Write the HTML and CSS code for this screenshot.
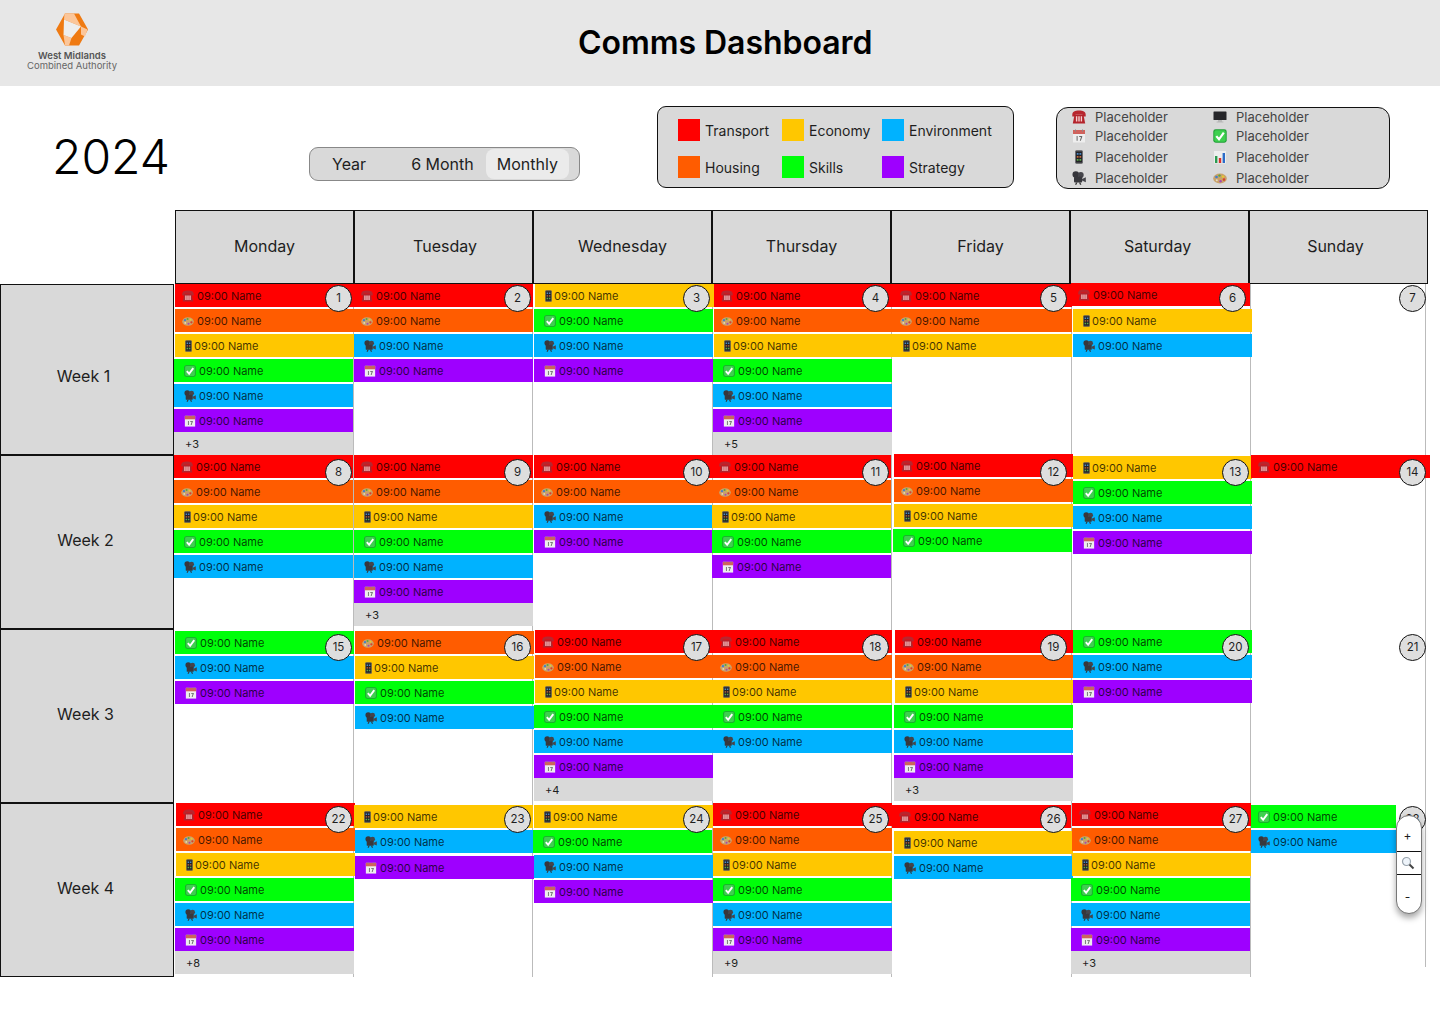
FILE: index.html
```html
<!DOCTYPE html>
<html>
<head>
    <title>Comms Dashboard</title>
    <link rel="stylesheet" href="styles.css">
</head>
<body>
    <!-- icon sprites -->
    <svg class="sprites" width="0" height="0">
        <symbol id="tel" viewBox="0 0 14 14">
            <path d="M.3 4.800C.3 1.800 3 .6 7 .6s6.700 1.200 6.700 4.200V6.400h-3.200V4.400h-7v2H.3z" fill="#b8262e"/>
            <path d="M2.600 4.600h8.800l1.800 8.800H.8z" fill="#b3232b"/>
            <path d="M3.900 6.300h1.400v5.300H3.900zM6.300 6.300h1.400v5.300H6.300zM8.700 6.300h1.400v5.300H8.700z" fill="#f7d0d0"/>
        </symbol>
        <symbol id="palette" viewBox="0 0 14 14">
            <ellipse cx="7" cy="7.500" rx="6.800" ry="5" fill="#c9a26b"/>
            <circle cx="3.500" cy="6" r="1.300" fill="#3f7fd0"/>
            <circle cx="6.500" cy="4.600" r="1.200" fill="#58a83c"/>
            <circle cx="10" cy="5.600" r="1.200" fill="#e8c92c"/>
            <circle cx="11" cy="8.600" r="1.300" fill="#d8402c"/>
            <circle cx="7.600" cy="10.200" r="1.200" fill="#a34bb0"/>
            <circle cx="3.800" cy="9.200" r="1" fill="#e8dcc0"/>
        </symbol>
        <symbol id="phone" viewBox="0 0 8 14">
            <rect x=".2" y=".2" width="7.600" height="13.600" rx="1.400" fill="#55555a"/>
            <rect x="1" y="1.600" width="6" height="10.800" fill="#232327"/>
            <path d="M1.800 3h1.700v1.700H1.800zM4.500 3h1.700v1.700H4.500z" fill="#4a88c8"/>
            <path d="M1.800 6h1.700v1.700H1.800zM4.500 6h1.700v1.700H4.500z" fill="#c86a3c"/>
            <path d="M1.800 9h1.700v1.700H1.800zM4.500 9h1.700v1.700H4.500z" fill="#5cab4a"/>
        </symbol>
        <symbol id="check" viewBox="0 0 14 14">
            <rect x=".3" y=".3" width="13.400" height="13.400" rx="2.400" fill="#1f9e35"/>
            <rect x="1.300" y="1.300" width="11.400" height="11.400" rx="1.600" fill="#3ed04f"/>
            <path d="M3.300 7.100l2.700 3.200 4.800-6.700" fill="none" stroke="#fff" stroke-width="2.200"/>
        </symbol>
        <symbol id="camera" viewBox="0 0 14 14">
            <circle cx="3.800" cy="3.600" r="3.300" fill="#37373c"/>
            <circle cx="8.800" cy="3.900" r="2.900" fill="#45454b"/>
            <rect x="2" y="5.500" width="8.200" height="6" rx="1" fill="#38383d"/>
            <path d="M10 8l3.800-1.800v5L10 9.500z" fill="#45454b"/>
            <path d="M4 11.500h1.400l-1 2.300H3zM7 11.500h1.400l1 2.300H8z" fill="#333"/>
        </symbol>
        <symbol id="cal" viewBox="0 0 14 14">
            <rect x="1" y="1" width="12" height="12.500" fill="#eeeeee"/>
            <rect x="1" y="1" width="12" height="4" fill="#d0625c"/>
            <path d="M3 .4h1v2H3zM10 .4h1v2h-1z" fill="#888"/>
            <path d="M4.600 7h1v4.800h-1zM7.200 7h3v1l-1.400 3.800h-1l1.200-3.800H7.200z" fill="#666"/>
        </symbol>
        <symbol id="screen" viewBox="0 0 14 14">
            <rect x=".5" y="1.500" width="13" height="8.500" rx=".6" fill="#26262a"/>
            <path d="M5 10h4v1.600h1.400v1H3.600v-1H5z" fill="#b8b8b8"/>
        </symbol>
        <symbol id="chart" viewBox="0 0 14 14">
            <rect x="1" y="1" width="12" height="12.500" fill="#eeeeee"/>
            <rect x="2" y="6" width="2.400" height="7" fill="#2c9a50"/>
            <rect x="5.800" y="8" width="2.400" height="5" fill="#d8302c"/>
            <rect x="9.600" y="3" width="2.400" height="10" fill="#2c6cc8"/>
        </symbol>
    </svg>

    <header class="top-bar">
        <div class="logo">
            <svg class="logo-mark" viewBox="0 0 32 33">
                <path d="M9 .5h14L32 16.500 23 32.500H9L0 16.500z" fill="#ef7a12"/>
                <path d="M8.500.5H18l7 13L8 6.500zM25 13.500l6.500 3-2.500 7-4-2zM7.500 22l8 3-2.500 7.500H9z" fill="#fbc69a"/>
                <path d="M8 6.500l17 7-9.500 11.500L7.500 22z" fill="#eeeeee"/>
            </svg>
            <div class="logo-name">West Midlands</div>
            <div class="logo-sub">Combined Authority</div>
        </div>
        <h1 class="title">Comms Dashboard</h1>
    </header>

    <section class="toolbar">
        <div class="year">2024</div>
        <div class="switch">
            <span class="switch-year">Year</span>
            <span class="switch-six">6 Month</span>
            <span class="switch-month">Monthly</span>
        </div>
        <div class="legend">
            <div class="key"><i class="swatch red"></i>Transport</div>
            <div class="key"><i class="swatch yellow"></i>Economy</div>
            <div class="key"><i class="swatch blue"></i>Environment</div>
            <div class="key"><i class="swatch orange"></i>Housing</div>
            <div class="key"><i class="swatch green"></i>Skills</div>
            <div class="key"><i class="swatch purple"></i>Strategy</div>
        </div>
        <div class="legend-icons">
            <div class="lic"><svg><use href="#tel"/></svg>Placeholder</div>
            <div class="lic"><svg><use href="#screen"/></svg>Placeholder</div>
            <div class="lic"><svg><use href="#cal"/></svg>Placeholder</div>
            <div class="lic"><svg><use href="#check"/></svg>Placeholder</div>
            <div class="lic"><svg><use href="#phone"/></svg>Placeholder</div>
            <div class="lic"><svg><use href="#chart"/></svg>Placeholder</div>
            <div class="lic"><svg><use href="#camera"/></svg>Placeholder</div>
            <div class="lic"><svg><use href="#palette"/></svg>Placeholder</div>
        </div>
    </section>

    <div class="day-heads">
        <div class="day-head">Monday</div>
        <div class="day-head tue">Tuesday</div>
        <div class="day-head">Wednesday</div>
        <div class="day-head">Thursday</div>
        <div class="day-head">Friday</div>
        <div class="day-head sat">Saturday</div>
        <div class="day-head sun">Sunday</div>
    </div>

    <main class="calendar">
        <!-- week 1 -->
        <div class="week w1">
            <div class="week-label">Week 1</div>
            <div class="day t1 l1"><span class="badge">1</span>
                <div class="ev red"><svg><use href="#tel"/></svg>09:00 Name</div>
                <div class="ev orange"><svg><use href="#palette"/></svg>09:00 Name</div>
                <div class="ev yellow"><svg><use href="#phone"/></svg>09:00 Name</div>
                <div class="ev green n1"><svg><use href="#check"/></svg>09:00 Name</div>
                <div class="ev blue n1"><svg><use href="#camera"/></svg>09:00 Name</div>
                <div class="ev purple n1"><svg><use href="#cal"/></svg>09:00 Name</div>
                <div class="more n1">+3</div>
            </div>
            <div class="day t1"><span class="badge">2</span>
                <div class="ev red"><svg><use href="#tel"/></svg>09:00 Name</div>
                <div class="ev orange"><svg><use href="#palette"/></svg>09:00 Name</div>
                <div class="ev blue"><svg><use href="#camera"/></svg>09:00 Name</div>
                <div class="ev purple"><svg><use href="#cal"/></svg>09:00 Name</div>
            </div>
            <div class="day t1 l1"><span class="badge">3</span>
                <div class="ev yellow p1"><svg><use href="#phone"/></svg>09:00 Name</div>
                <div class="ev green"><svg><use href="#check"/></svg>09:00 Name</div>
                <div class="ev blue"><svg><use href="#camera"/></svg>09:00 Name</div>
                <div class="ev purple"><svg><use href="#cal"/></svg>09:00 Name</div>
            </div>
            <div class="day t1 l1"><span class="badge">4</span>
                <div class="ev red"><svg><use href="#tel"/></svg>09:00 Name</div>
                <div class="ev orange"><svg><use href="#palette"/></svg>09:00 Name</div>
                <div class="ev yellow"><svg><use href="#phone"/></svg>09:00 Name</div>
                <div class="ev green n1"><svg><use href="#check"/></svg>09:00 Name</div>
                <div class="ev blue n1"><svg><use href="#camera"/></svg>09:00 Name</div>
                <div class="ev purple n1"><svg><use href="#cal"/></svg>09:00 Name</div>
                <div class="more n1">+5</div>
            </div>
            <div class="day t1 l1"><span class="badge">5</span>
                <div class="ev red"><svg><use href="#tel"/></svg>09:00 Name</div>
                <div class="ev orange"><svg><use href="#palette"/></svg>09:00 Name</div>
                <div class="ev yellow"><svg><use href="#phone"/></svg>09:00 Name</div>
            </div>
            <div class="day t0 sat6"><span class="badge">6</span>
                <div class="ev red gap3 n1"><svg><use href="#tel"/></svg>09:00 Name</div>
                <div class="ev yellow p1"><svg><use href="#phone"/></svg>09:00 Name</div>
                <div class="ev blue p1"><svg><use href="#camera"/></svg>09:00 Name</div>
            </div>
            <div class="day t1"><span class="badge">7</span></div>
        </div>

        <!-- week 2 -->
        <div class="week w2">
            <div class="week-label">Week 2</div>
            <div class="day t1"><span class="badge">8</span>
                <div class="ev red"><svg><use href="#tel"/></svg>09:00 Name</div>
                <div class="ev orange"><svg><use href="#palette"/></svg>09:00 Name</div>
                <div class="ev yellow"><svg><use href="#phone"/></svg>09:00 Name</div>
                <div class="ev green"><svg><use href="#check"/></svg>09:00 Name</div>
                <div class="ev blue"><svg><use href="#camera"/></svg>09:00 Name</div>
            </div>
            <div class="day t1"><span class="badge">9</span>
                <div class="ev red"><svg><use href="#tel"/></svg>09:00 Name</div>
                <div class="ev orange"><svg><use href="#palette"/></svg>09:00 Name</div>
                <div class="ev yellow"><svg><use href="#phone"/></svg>09:00 Name</div>
                <div class="ev green"><svg><use href="#check"/></svg>09:00 Name</div>
                <div class="ev blue"><svg><use href="#camera"/></svg>09:00 Name</div>
                <div class="ev purple"><svg><use href="#cal"/></svg>09:00 Name</div>
                <div class="more">+3</div>
            </div>
            <div class="day t1 l1"><span class="badge">10</span>
                <div class="ev red"><svg><use href="#tel"/></svg>09:00 Name</div>
                <div class="ev orange"><svg><use href="#palette"/></svg>09:00 Name</div>
                <div class="ev blue"><svg><use href="#camera"/></svg>09:00 Name</div>
                <div class="ev purple"><svg><use href="#cal"/></svg>09:00 Name</div>
            </div>
            <div class="day t1 lm1"><span class="badge">11</span>
                <div class="ev red"><svg><use href="#tel"/></svg>09:00 Name</div>
                <div class="ev orange"><svg><use href="#palette"/></svg>09:00 Name</div>
                <div class="ev yellow"><svg><use href="#phone"/></svg>09:00 Name</div>
                <div class="ev green"><svg><use href="#check"/></svg>09:00 Name</div>
                <div class="ev purple"><svg><use href="#cal"/></svg>09:00 Name</div>
            </div>
            <div class="day t0 l2"><span class="badge">12</span>
                <div class="ev red"><svg><use href="#tel"/></svg>09:00 Name</div>
                <div class="ev orange"><svg><use href="#palette"/></svg>09:00 Name</div>
                <div class="ev yellow"><svg><use href="#phone"/></svg>09:00 Name</div>
                <div class="ev green n1"><svg><use href="#check"/></svg>09:00 Name</div>
            </div>
            <div class="day t2 l1"><span class="badge">13</span>
                <div class="ev yellow"><svg><use href="#phone"/></svg>09:00 Name</div>
                <div class="ev green"><svg><use href="#check"/></svg>09:00 Name</div>
                <div class="ev blue"><svg><use href="#camera"/></svg>09:00 Name</div>
                <div class="ev purple"><svg><use href="#cal"/></svg>09:00 Name</div>
            </div>
            <div class="day t1"><span class="badge">14</span>
                <div class="ev red"><svg><use href="#tel"/></svg>09:00 Name</div>
            </div>
        </div>

        <!-- week 3 -->
        <div class="week w3">
            <div class="week-label">Week 3</div>
            <div class="day t3 l1"><span class="badge">15</span>
                <div class="ev green"><svg><use href="#check"/></svg>09:00 Name</div>
                <div class="ev blue"><svg><use href="#camera"/></svg>09:00 Name</div>
                <div class="ev purple"><svg><use href="#cal"/></svg>09:00 Name</div>
            </div>
            <div class="day t3 l1"><span class="badge">16</span>
                <div class="ev orange"><svg><use href="#palette"/></svg>09:00 Name</div>
                <div class="ev yellow"><svg><use href="#phone"/></svg>09:00 Name</div>
                <div class="ev green"><svg><use href="#check"/></svg>09:00 Name</div>
                <div class="ev blue"><svg><use href="#camera"/></svg>09:00 Name</div>
            </div>
            <div class="day t2 l2"><span class="badge">17</span>
                <div class="ev red"><svg><use href="#tel"/></svg>09:00 Name</div>
                <div class="ev orange"><svg><use href="#palette"/></svg>09:00 Name</div>
                <div class="ev yellow"><svg><use href="#phone"/></svg>09:00 Name</div>
                <div class="ev green n1"><svg><use href="#check"/></svg>09:00 Name</div>
                <div class="ev blue n1"><svg><use href="#camera"/></svg>09:00 Name</div>
                <div class="ev purple n1"><svg><use href="#cal"/></svg>09:00 Name</div>
                <div class="more n1">+4</div>
            </div>
            <div class="day t2"><span class="badge">18</span>
                <div class="ev red"><svg><use href="#tel"/></svg>09:00 Name</div>
                <div class="ev orange"><svg><use href="#palette"/></svg>09:00 Name</div>
                <div class="ev yellow"><svg><use href="#phone"/></svg>09:00 Name</div>
                <div class="ev green"><svg><use href="#check"/></svg>09:00 Name</div>
                <div class="ev blue"><svg><use href="#camera"/></svg>09:00 Name</div>
            </div>
            <div class="day t2 l3"><span class="badge">19</span>
                <div class="ev red"><svg><use href="#tel"/></svg>09:00 Name</div>
                <div class="ev orange"><svg><use href="#palette"/></svg>09:00 Name</div>
                <div class="ev yellow"><svg><use href="#phone"/></svg>09:00 Name</div>
                <div class="ev green n1"><svg><use href="#check"/></svg>09:00 Name</div>
                <div class="ev blue n1"><svg><use href="#camera"/></svg>09:00 Name</div>
                <div class="ev purple n1"><svg><use href="#cal"/></svg>09:00 Name</div>
                <div class="more n1">+3</div>
            </div>
            <div class="day t2 l1"><span class="badge">20</span>
                <div class="ev green"><svg><use href="#check"/></svg>09:00 Name</div>
                <div class="ev blue"><svg><use href="#camera"/></svg>09:00 Name</div>
                <div class="ev purple"><svg><use href="#cal"/></svg>09:00 Name</div>
            </div>
            <div class="day t2"><span class="badge">21</span></div>
        </div>

        <!-- week 4 -->
        <div class="week w4">
            <div class="week-label">Week 4</div>
            <div class="day t1 l2"><span class="badge">22</span>
                <div class="ev red"><svg><use href="#tel"/></svg>09:00 Name</div>
                <div class="ev orange"><svg><use href="#palette"/></svg>09:00 Name</div>
                <div class="ev yellow"><svg><use href="#phone"/></svg>09:00 Name</div>
                <div class="ev green n1"><svg><use href="#check"/></svg>09:00 Name</div>
                <div class="ev blue n1"><svg><use href="#camera"/></svg>09:00 Name</div>
                <div class="ev purple n1"><svg><use href="#cal"/></svg>09:00 Name</div>
                <div class="more n1">+8</div>
            </div>
            <div class="day t3 l1"><span class="badge">23</span>
                <div class="ev yellow n1"><svg><use href="#phone"/></svg>09:00 Name</div>
                <div class="ev blue gap3"><svg><use href="#camera"/></svg>09:00 Name</div>
                <div class="ev purple"><svg><use href="#cal"/></svg>09:00 Name</div>
            </div>
            <div class="day t3 l1"><span class="badge">24</span>
                <div class="ev yellow"><svg><use href="#phone"/></svg>09:00 Name</div>
                <div class="ev green n1"><svg><use href="#check"/></svg>09:00 Name</div>
                <div class="ev blue"><svg><use href="#camera"/></svg>09:00 Name</div>
                <div class="ev purple"><svg><use href="#cal"/></svg>09:00 Name</div>
            </div>
            <div class="day t1"><span class="badge">25</span>
                <div class="ev red"><svg><use href="#tel"/></svg>09:00 Name</div>
                <div class="ev orange"><svg><use href="#palette"/></svg>09:00 Name</div>
                <div class="ev yellow"><svg><use href="#phone"/></svg>09:00 Name</div>
                <div class="ev green"><svg><use href="#check"/></svg>09:00 Name</div>
                <div class="ev blue"><svg><use href="#camera"/></svg>09:00 Name</div>
                <div class="ev purple"><svg><use href="#cal"/></svg>09:00 Name</div>
                <div class="more">+9</div>
            </div>
            <div class="day t3"><span class="badge">26</span>
                <div class="ev red gap3"><svg><use href="#tel"/></svg>09:00 Name</div>
                <div class="ev yellow p2"><svg><use href="#phone"/></svg>09:00 Name</div>
                <div class="ev blue p2"><svg><use href="#camera"/></svg>09:00 Name</div>
            </div>
            <div class="day t1"><span class="badge">27</span>
                <div class="ev red"><svg><use href="#tel"/></svg>09:00 Name</div>
                <div class="ev orange"><svg><use href="#palette"/></svg>09:00 Name</div>
                <div class="ev yellow"><svg><use href="#phone"/></svg>09:00 Name</div>
                <div class="ev green n1"><svg><use href="#check"/></svg>09:00 Name</div>
                <div class="ev blue n1"><svg><use href="#camera"/></svg>09:00 Name</div>
                <div class="ev purple n1"><svg><use href="#cal"/></svg>09:00 Name</div>
                <div class="more n1">+3</div>
            </div>
            <div class="day t3 narrow"><span class="badge">28</span>
                <div class="ev green"><svg><use href="#check"/></svg>09:00 Name</div>
                <div class="ev blue"><svg><use href="#camera"/></svg>09:00 Name</div>
            </div>
        </div>
    </main>

    <div class="zoom-ctl">
        <div class="zoom-btn zoom-high">+</div>
        <div class="zoom-btn zoom-mid">
            <svg viewBox="0 0 14 14" width="14" height="14">
                <circle cx="5.500" cy="5.500" r="4" fill="#eef4fa" stroke="#9aa4ae" stroke-width="1.200"/>
                <path d="M8.500 8.500l4 4" stroke="#444" stroke-width="2"/>
            </svg>
        </div>
        <div class="zoom-btn zoom-low">-</div>
    </div>
</body>
</html>
```

FILE: styles.css
```css
* {
    margin: 0;
    padding: 0;
    box-sizing: border-box;
}

body {
    background: #fff;
    color: #1e1e1e;
    font-family: "Inter", "Liberation Sans", sans-serif;
    width: 1440px;
    height: 1024px;
    position: relative;
    overflow: hidden;
}

.sprites {
    position: absolute;
}

/* top bar */
.top-bar {
    height: 86px;
    background: #e7e7e7;
    display: flex;
    align-items: center;
}

.logo {
    width: 144px;
    padding-top: 13px;
    height: 86px;
    display: flex;
    flex-direction: column;
    align-items: center;
    color: #555;
    font-size: 9.5px;
    line-height: 10px;
}

.logo-mark {
    width: 32px;
    height: 33px;
    margin-bottom: 5px;
}

.logo-name {
    font-weight: 600;
}

.logo-sub {
    color: #666;
}

.title {
    margin: 0 0 2px 434px;
    font-size: 32px;
    font-weight: 600;
    color: #000;
    letter-spacing: -0.05px;
}

/* year, switch and legends */
.toolbar {
    height: 124px;
    display: flex;
    align-items: flex-start;
}

.year {
    margin: 42px 0 0 52px;
    width: 257px;
    font-size: 48px;
    line-height: 58px;
    font-weight: 300;
    color: #000;
}

.switch {
    margin-top: 61px;
    width: 271px;
    height: 34px;
    background: #d9d9d9;
    border: 1px solid #888;
    border-radius: 9px;
    display: flex;
    align-items: center;
    font-size: 16px;
}

.switch-year {
    margin-left: 22px;
}

.switch-six {
    margin-left: 45px;
}

.switch-month {
    margin-left: 12px;
    background: #ebebeb;
    border-radius: 8px;
    height: 30px;
    line-height: 30px;
    padding: 0 11px;
}

.legend {
    margin: 20px 0 0 77px;
    width: 357px;
    height: 82px;
    background: #d9d9d9;
    border: 1px solid #111;
    border-radius: 9px;
    padding: 12px 0 0 20px;
    display: grid;
    grid-template-columns: 104px 100px auto;
    grid-auto-rows: 22px;
    row-gap: 15px;
    font-size: 14px;
}

.key {
    display: flex;
    align-items: center;
    gap: 5px;
}

.swatch {
    width: 22px;
    height: 22px;
}

.swatch.red { background: #ff0000; }
.swatch.yellow { background: #ffc700; }
.swatch.blue { background: #00b2ff; }
.swatch.orange { background: #ff5c00; }
.swatch.green { background: #00ff0a; }
.swatch.purple { background: #9e00ff; }

.legend-icons {
    margin: 21px 0 0 42px;
    width: 334px;
    height: 82px;
    background: #d9d9d9;
    border: 1px solid #111;
    border-radius: 12px;
    padding-left: 15px;
    display: grid;
    grid-template-columns: 141px auto;
    grid-template-rows: 18px 21px 21px 21px;
    font-size: 13px;
    color: #444;
}

.lic {
    display: flex;
    align-items: center;
    height: 19px;
    gap: 9px;
}

.lic:nth-child(-n+2) {
    margin-top: -1px;
}

.lic svg {
    width: 14px;
    height: 14px;
}

/* calendar */
.day-heads {
    display: flex;
    margin-left: 175px;
}

.day-head {
    width: 179px;
    height: 74px;
    background: #d9d9d9;
    border: 1px solid #111;
    padding-bottom: 2px;
    display: flex;
    align-items: center;
    justify-content: center;
    font-size: 16px;
}

.day-head.tue { padding-left: 3px; }
.day-head.sat { padding-right: 4px; }
.day-head.sun { padding-right: 6px; }

.week {
    display: grid;
    grid-template-columns: 174px 180px 179px 180px 179px 180px 179px 175px;
    height: 174px;
}

.week.w1 {
    height: 171px;
}

.week-label {
    background: #d9d9d9;
    border: 1px solid #111;
    padding: 0 3px 4px 0;
    display: flex;
    align-items: center;
    justify-content: center;
    font-size: 16px;
}

.w1 .week-label {
    padding: 12px 7px 0 0;
}

.day {
    position: relative;
    border-right: 1px solid #bbb;
    display: flex;
    flex-direction: column;
    gap: 2px;
}

.w4 .day:last-child {
    height: 164px;
}

/* small drift of each cell, top */
.t0 > .ev:first-of-type { margin-top: -1px; }
.t2 { padding-top: 1px; }
.t3 { padding-top: 2px; }

/* and left */
.lm1 { margin-left: -1px; }
.l1 { padding-left: 1px; }
.l2 { padding-left: 2px; }
.l3 { padding-left: 3px; }

.ev {
    flex: none;
    width: 179px;
    height: 23px;
    display: flex;
    align-items: center;
    font-size: 11px;
    color: rgba(0, 0, 0, 0.75);
    padding-left: 10px;
    gap: 3px;
}

.ev svg {
    width: 12px;
    height: 12px;
    flex: none;
}

.ev.red { background: #ff0000; padding-left: 7px; }
.ev.orange { background: #ff5c00; padding-left: 7px; }
.ev.yellow { background: #ffc700; padding-left: 10px; gap: 2px; }
.ev.yellow svg { width: 7px; height: 12px; }
.ev.green { background: #00ff0a; }
.ev.blue { background: #00b2ff; }
.ev.purple { background: #9e00ff; }

.gap3 { margin-bottom: 1px; }
.n1 { margin-left: -1px; }
.p1 { margin-left: 1px; }
.p2 { margin-left: 2px; }

.more {
    flex: none;
    width: 179px;
    height: 23px;
    margin-top: -2px;
    background: #d9d9d9;
    font-size: 11px;
    line-height: 25px;
    padding-left: 11px;
}

.narrow .ev {
    width: 145px;
    padding-left: 7px;
}

/* day number */
.badge {
    position: absolute;
    width: 27px;
    height: 27px;
    right: 1px;
    z-index: 2;
    border: 1px solid #111;
    border-radius: 50%;
    background: #dedede;
    font-size: 11.5px;
    line-height: 25px;
    text-align: center;
}

.w1 .badge { top: 1px; }
.w2 .badge { top: 4px; }
.w3 .badge { top: 5px; }
.w4 .badge { top: 3px; }

.day:nth-child(4) .badge,
.day:nth-child(5) .badge { right: 2px; }
.day:nth-child(6) .badge { right: 4px; }
.day:nth-child(8) .badge { right: -1px; }
.w1 .sat6 .badge { right: 4px; }

/* floating zoom control */
.zoom-ctl {
    position: absolute;
    left: 1396px;
    top: 815px;
    width: 26px;
    height: 99px;
    background: #fff;
    border: 1px solid #777;
    border-radius: 13px;
    box-shadow: 0 4px 6px rgba(0, 0, 0, 0.35);
    z-index: 5;
    display: flex;
    flex-direction: column;
    font-size: 12px;
    padding-right: 3px;
}

.zoom-btn {
    height: 35px;
    display: flex;
    align-items: center;
    justify-content: center;
}

.zoom-high {
    padding-top: 3px;
}

.zoom-mid {
    height: 24px;
    margin-right: -3px;
    border-top: 1px solid #111;
    border-bottom: 1px solid #111;
    padding-right: 2px;
}

.zoom-low {
    height: 37px;
    padding-top: 5px;
}
```
